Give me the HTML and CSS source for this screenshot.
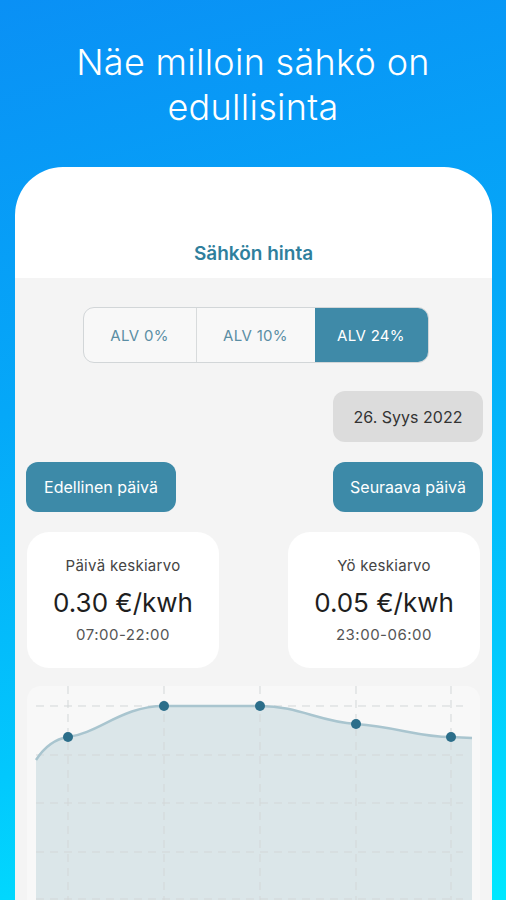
FILE: index.html
```html
<!DOCTYPE html>
<html lang="fi">
<head>
<meta charset="utf-8">
<title>Sähkön hinta</title>
<link rel="stylesheet" href="styles.css">
</head>
<body>
<div class="screen">
  <h1 class="headline">Näe milloin sähkö on<br>edullisinta</h1>
  <div class="phone">
    <div class="appbar">Sähkön hinta</div>
    <div class="content">
      <div class="segments">
        <div class="seg seg-a">ALV 0%</div>
        <div class="seg seg-b">ALV 10%</div>
        <div class="seg seg-c active">ALV 24%</div>
      </div>
      <div class="date-row">
        <div class="date-btn">26. Syys 2022</div>
      </div>
      <div class="nav-row">
        <div class="nav-btn">Edellinen päivä</div>
        <div class="nav-btn">Seuraava päivä</div>
      </div>
      <div class="cards">
        <div class="card">
          <div class="card-label">Päivä keskiarvo</div>
          <div class="card-value">0.30 €/kwh</div>
          <div class="card-time">07:00-22:00</div>
        </div>
        <div class="card">
          <div class="card-label">Yö keskiarvo</div>
          <div class="card-value">0.05 €/kwh</div>
          <div class="card-time">23:00-06:00</div>
        </div>
      </div>
      <div class="chart">
        <svg class="chart-svg" width="453" height="220" viewBox="0 0 453 220">
          <path class="area" d="M9,74 C18,60 28,53 41,51 C72,47 95,20 137,20 L233,20 C272,20 292,36 329,38 C370,41 392,51 424,51 L445,52 L445,220 L9,220 Z"/>
          <g class="grid">
            <line x1="41" y1="0" x2="41" y2="220"/>
            <line x1="137" y1="0" x2="137" y2="220"/>
            <line x1="233" y1="0" x2="233" y2="220"/>
            <line x1="329" y1="0" x2="329" y2="220"/>
            <line x1="424" y1="0" x2="424" y2="220"/>
            <line x1="9" y1="20" x2="436" y2="20"/>
            <line x1="9" y1="69" x2="436" y2="69"/>
            <line x1="9" y1="117" x2="436" y2="117"/>
            <line x1="9" y1="166" x2="436" y2="166"/>
            <line x1="9" y1="213" x2="436" y2="213"/>
          </g>
          <path class="line" d="M9,74 C18,60 28,53 41,51 C72,47 95,20 137,20 L233,20 C272,20 292,36 329,38 C370,41 392,51 424,51 L445,52"/>
          <g class="dots">
            <circle cx="41" cy="51" r="5"/>
            <circle cx="137" cy="20" r="5"/>
            <circle cx="233" cy="20" r="5"/>
            <circle cx="329" cy="38" r="5"/>
            <circle cx="424" cy="51" r="5"/>
          </g>
        </svg>
      </div>
    </div>
  </div>
</div>
</body>
</html>
```

FILE: styles.css
```css
* { box-sizing: border-box; }
html, body { margin: 0; padding: 0; }
body {
  width: 506px;
  height: 900px;
  overflow: hidden;
  font-family: Inter, "Noto Sans", sans-serif;
}
.screen {
  width: 506px;
  height: 900px;
  background: linear-gradient(165deg, #0a90f5 0%, #05a8f8 40%, #02c8fd 75%, #00e8ff 100%);
  display: flex;
  flex-direction: column;
  overflow: hidden;
}
.headline {
  flex-shrink: 0;
  margin: 40px 0 0;
  text-align: center;
  color: #ffffff;
  font-weight: 300;
  font-size: 36px;
  line-height: 45px;
  letter-spacing: 0.3px;
}
.phone {
  margin: 37px 14px 0 15px;
  flex: 1;
  min-height: 0;
  background: #ffffff;
  border-radius: 48px 48px 0 0;
  overflow: hidden;
  display: flex;
  flex-direction: column;
}
.appbar {
  flex-shrink: 0;
  height: 111px;
  padding-top: 75px;
  text-align: center;
  font-size: 19px;
  line-height: 24px;
  font-weight: 600;
  color: #2f7f9d;
}
.content {
  flex: 1;
  min-height: 0;
  background: #f4f4f4;
  padding: 29px 9px 0 11px;
  display: flex;
  flex-direction: column;
}
.content > * { flex-shrink: 0; }
.segments {
  align-self: center;
  margin-left: 2px;
  display: flex;
  height: 56px;
  border: 1px solid #d2d6d8;
  border-radius: 11px;
  overflow: hidden;
  background: #f8f8f8;
}
.seg {
  display: flex;
  align-items: center;
  justify-content: center;
  font-size: 15px;
  letter-spacing: 0.3px;
  color: #5b8ea4;
}
.seg-a { width: 113px; border-right: 1px solid #d8dbdc; }
.seg-b { width: 118px; }
.seg-c { width: 113px; }
.seg.active { background: #3f8aa8; color: #ffffff; }
.date-row {
  margin-top: 28px;
  display: flex;
  justify-content: flex-end;
}
.date-btn {
  width: 150px;
  height: 51px;
  border-radius: 12px;
  background: #dcdcdc;
  display: flex;
  align-items: center;
  justify-content: center;
  font-size: 16px;
  color: #333333;
}
.nav-row {
  margin-top: 20px;
  display: flex;
  justify-content: space-between;
}
.nav-btn {
  width: 150px;
  height: 50px;
  border-radius: 12px;
  background: #3d8aa8;
  color: #ffffff;
  display: flex;
  align-items: center;
  justify-content: center;
  font-size: 16px;
}
.cards {
  margin-top: 20px;
  padding: 0 3px 0 1px;
  display: flex;
  justify-content: space-between;
}
.card {
  width: 192px;
  height: 136px;
  background: #ffffff;
  border-radius: 22px;
  display: flex;
  flex-direction: column;
  align-items: center;
  padding-top: 24px;
}
.card-label {
  font-size: 15px;
  line-height: 20px;
  letter-spacing: 0.3px;
  color: #444444;
}
.card-value {
  margin-top: 12px;
  font-size: 26px;
  line-height: 30px;
  color: #1e1e1e;
}
.card-time {
  margin-top: 7px;
  font-size: 15px;
  line-height: 20px;
  letter-spacing: 0.5px;
  color: #555555;
}
.chart {
  margin: 18px 3px 0 1px;
  flex: 1;
  background: #f8f8f8;
  border-radius: 14px 14px 0 0;
  overflow: hidden;
}
.chart-svg { display: block; }
.area { fill: #dbe6e9; }
.grid line {
  stroke: #d3d7d8;
  stroke-width: 1;
  stroke-dasharray: 8 6;
}
.line {
  fill: none;
  stroke: #a9c5cf;
  stroke-width: 2.5;
}
.dots circle { fill: #2c6e8a; }
```
